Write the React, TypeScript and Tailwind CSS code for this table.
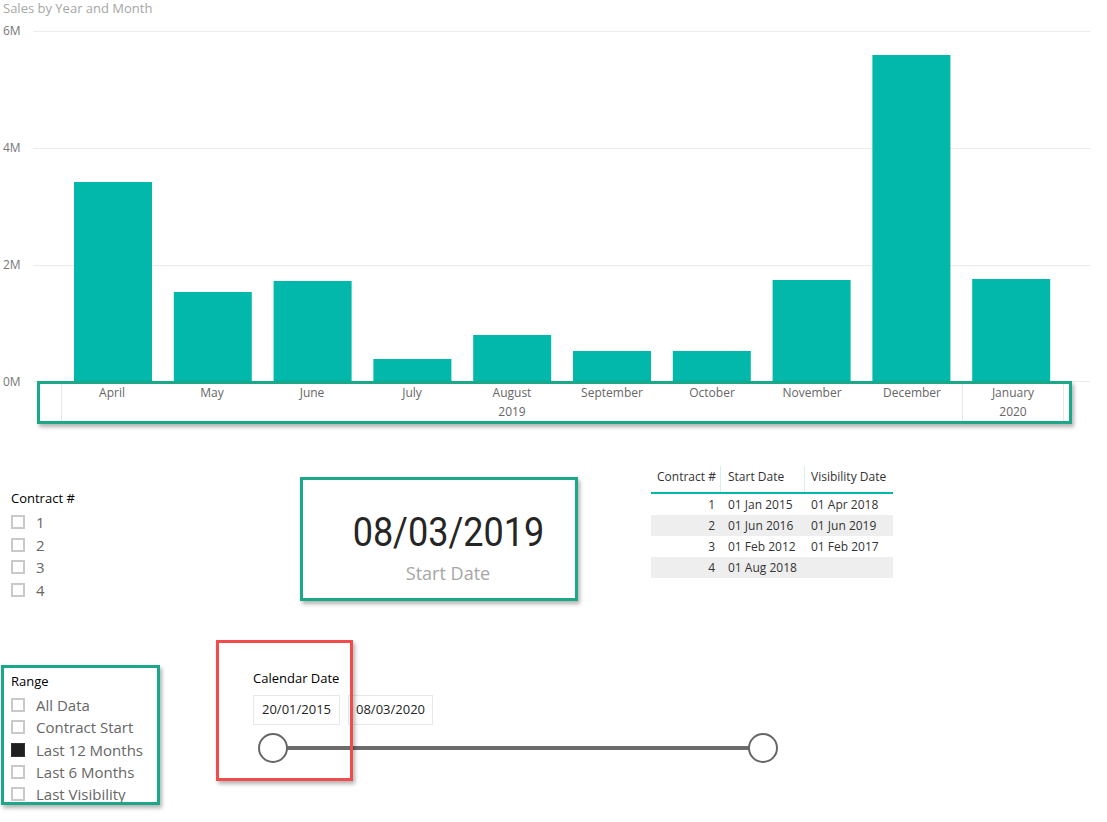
import React from 'react';

// Montants par mois, en pixels au-dessus de la ligne 0M
const bars = [
  { month: 'April', h: 199 },
  { month: 'May', h: 89 },
  { month: 'June', h: 100 },
  { month: 'July', h: 22 },
  { month: 'August', h: 46 },
  { month: 'September', h: 30 },
  { month: 'October', h: 30 },
  { month: 'November', h: 101 },
  { month: 'December', h: 326 },
  { month: 'January', h: 102 },
];

const contracts = [
  { id: 1, start: '01 Jan 2015', visibility: '01 Apr 2018' },
  { id: 2, start: '01 Jun 2016', visibility: '01 Jun 2019' },
  { id: 3, start: '01 Feb 2012', visibility: '01 Feb 2017' },
  { id: 4, start: '01 Aug 2018', visibility: '' },
];

const ranges = ['All Data', 'Contract Start', 'Last 12 Months', 'Last 6 Months', 'Last Visibility'];

function Checkbox({ checked }: { checked?: boolean }) {
  return checked ? (
    <span className="w-[14px] h-[14px] shrink-0 bg-[#1f1f1f] border border-[#333]" />
  ) : (
    <span className="w-[14px] h-[14px] shrink-0 border-2 border-[#c9c9c9]" />
  );
}

function SalesChart() {
  return (
    <div className="relative h-[424px]">
      <div className="h-[15px] pt-[1px] pl-[3px] text-[13px] leading-[14px] text-[#a6a6a6]">
        Sales by Year and Month
      </div>

      {/* Zone du graphique */}
      <div className="flex mt-[16px]">
        <div className="w-[33px] h-[351px]">
          <div className="-mt-[7px] h-[365px] flex flex-col justify-between pl-[3px] text-[12px] leading-[14px] text-[#777]">
            <span>6M</span>
            <span>4M</span>
            <span>2M</span>
            <span>0M</span>
          </div>
        </div>
        <svg width="1057" height="351" className="block">
          {[0.5, 117.5, 234.5, 350.5].map((y) => (
            <line key={y} x1="0" x2="1057" y1={y} y2={y} stroke="#ebebeb" strokeWidth="1" />
          ))}
          {bars.map((b, i) => (
            <rect key={b.month} x={41 + i * 99.8} y={350 - b.h} width="78" height={b.h} fill="#01b8aa" />
          ))}
        </svg>
      </div>

      {/* Axe des mois */}
      <div className="flex ml-[61px] h-[40px] text-[12px] leading-[14px] text-[#666]">
        <div className="border-l border-[#e6e6e6]">
          <div className="flex">
            {bars.slice(0, 9).map((b) => (
              <div key={b.month} className="w-[100px] pt-[4px] text-center">
                {b.month}
              </div>
            ))}
          </div>
          <div className="pt-[5px] text-center">2019</div>
        </div>
        <div className="border-l border-r border-[#e6e6e6]">
          <div className="w-[100px] pt-[4px] text-center">January</div>
          <div className="pt-[5px] text-center">2020</div>
        </div>
      </div>

      <div className="absolute left-[37px] top-[381px] w-[1035px] h-[43px] border-[3px] border-[#1aa888] shadow-[2px_3px_4px_rgba(0,0,0,0.3)]" />
    </div>
  );
}

export default function App() {
  return (
    <div className="relative w-[1107px] h-[822px] overflow-hidden bg-white text-[#252525] font-['Segoe_UI','Open_Sans',sans-serif]">
      <SalesChart />

      {/* Première rangée : slicer, carte, tableau */}
      <div className="flex items-start h-[177px]">
        <div className="ml-[11px] mt-[66px] w-[289px]">
          <div className="text-[13px] leading-[16px] text-black">Contract #</div>
          <div className="mt-[5px]">
            {[1, 2, 3, 4].map((n) => (
              <div key={n} className="h-[22.5px] flex items-center">
                <Checkbox />
                <span className="ml-[11px] text-[15px] leading-[18px] text-[#666]">{n}</span>
              </div>
            ))}
          </div>
        </div>

        <div className="mt-[53px] w-[278px] h-[124px] border-[3px] border-[#1aa888] shadow-[2px_3px_4px_rgba(0,0,0,0.3)] flex flex-col items-center pl-[18px]">
          <div className="pt-[32px] font-['Roboto',sans-serif] text-[40px] leading-[42px] scale-x-[0.9] text-[#252525]">
            08/03/2019
          </div>
          <div className="mt-[8px] text-[18px] leading-[22px] text-[#a6a6a6]">Start Date</div>
        </div>

        <div className="ml-[73px] mt-[42px] w-[242px] text-[12px] text-[#333]">
          <div className="flex h-[28px] border-b-2 border-[#01b8aa]">
            <div className="w-[70px] pl-[6px] pt-[2px] border-r border-[#d8efed]">Contract #</div>
            <div className="w-[84px] pl-[7px] pt-[2px] border-r border-[#d8efed]">Start Date</div>
            <div className="w-[88px] pl-[6px] pt-[2px]">Visibility Date</div>
          </div>
          {contracts.map((c, i) => (
            <div key={c.id} className={`flex h-[21px] items-center ${i % 2 === 1 ? 'bg-[#eeeeee]' : 'bg-white'}`}>
              <div className="w-[70px] pr-[6px] text-right">{c.id}</div>
              <div className="w-[84px] pl-[7px]">{c.start}</div>
              <div className="w-[88px] pl-[6px]">{c.visibility}</div>
            </div>
          ))}
        </div>
      </div>

      {/* Deuxième rangée : Range et Calendar Date */}
      <div className="flex items-start">
        <div className="ml-[1px] mt-[64px] w-[159px] h-[140px] border-[3px] border-[#1aa888] overflow-hidden shadow-[2px_3px_4px_rgba(0,0,0,0.3)] pl-[7px] pt-[5px]">
          <div className="text-[13px] leading-[16px] text-black">Range</div>
          <div className="mt-[5px]">
            {ranges.map((r) => (
              <div key={r} className="h-[22.25px] flex items-center">
                <Checkbox checked={r === 'Last 12 Months'} />
                <span className="ml-[11px] text-[15px] leading-[18px] text-[#666] whitespace-nowrap">{r}</span>
              </div>
            ))}
          </div>
        </div>

        <div className="ml-[93px] mt-[69px]">
          <div className="text-[13px] leading-[16px] text-black">Calendar Date</div>
          <div className="mt-[9px] flex gap-[8px] text-[13px] text-[#222]">
            <div className="w-[87px] h-[30px] border border-[#e8e8e8] flex items-center justify-center">20/01/2015</div>
            <div className="w-[85px] h-[30px] border border-[#e8e8e8] flex items-center justify-center">08/03/2020</div>
          </div>
          <div className="relative mt-[8px] ml-[5px] w-[520px] h-[30px] flex justify-between">
            <div className="absolute left-[15px] right-[15px] top-[13px] h-[4px] bg-[#6b6b6b]" />
            <span className="relative w-[30px] h-[30px] rounded-full border-[2.5px] border-[#666] bg-white" />
            <span className="relative w-[30px] h-[30px] rounded-full border-[2.5px] border-[#666] bg-white" />
          </div>
        </div>
      </div>

      {/* Cadre rouge */}
      <div className="absolute left-[216px] top-[640px] w-[137px] h-[141px] border-[3px] border-[#f24b4b] shadow-[2px_3px_4px_rgba(0,0,0,0.3)]" />
    </div>
  );
}
